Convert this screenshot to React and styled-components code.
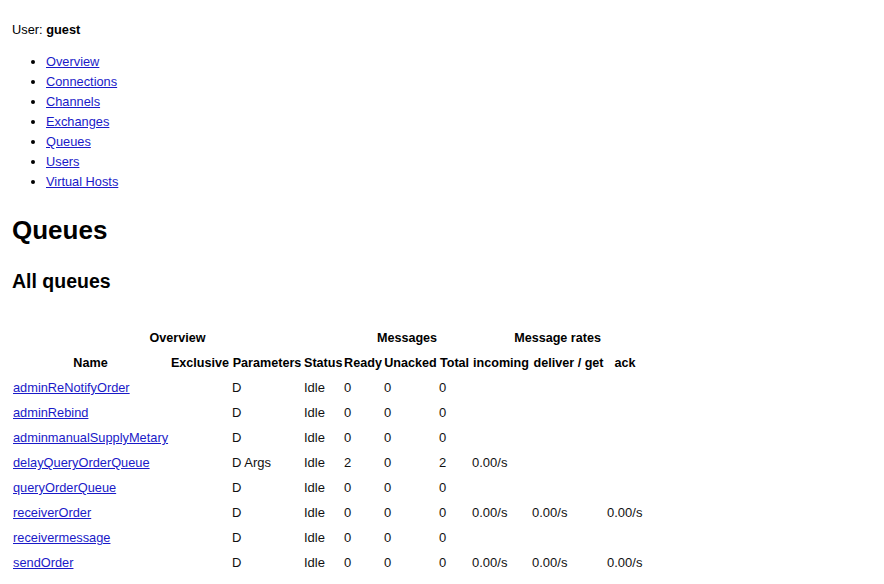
import React from 'react';
import styled, { createGlobalStyle } from 'styled-components';

const GlobalStyle = createGlobalStyle`
    body {
        margin: 0;
        background: #ffffff;
        color: #000000;
        font-family: "Liberation Sans", Arial, sans-serif;
        font-size: 12.8px;
    }
`;

const Page = styled.div`
    padding: 21px 12px 0 12px;
`;

const UserLine = styled.div`
    line-height: 18px;
    b {
        font-weight: bold;
    }
`;

const Nav = styled.ul`
    list-style: disc;
    margin: 13px 0 0 0;
    padding-left: 34px;
    li {
        line-height: 20px;
    }
`;

const Link = styled.a`
    color: #1a1ac8;
    text-decoration: underline;
`;

const Title = styled.h1`
    font-size: 26px;
    line-height: 30px;
    font-weight: bold;
    margin: 23px 0 0 0;
`;

const SubTitle = styled.h2`
    font-size: 19.5px;
    line-height: 23px;
    font-weight: bold;
    margin: 25px 0 0 0;
`;

const QueueTable = styled.table`
    border-collapse: collapse;
    table-layout: fixed;
    width: 632px;
    margin-top: 32px;
    margin-left: 0;
`;

const Col = styled.col`
    width: ${(props) => props.$w}px;
`;

const HeadCell = styled.th`
    font-size: 12.6px;
    font-weight: bold;
    text-align: center;
    height: 25px;
    padding: 0 1px;
    white-space: nowrap;
    vertical-align: middle;
`;

const Cell = styled.td`
    font-size: 13px;
    text-align: left;
    height: 25px;
    padding: 0 1px;
    white-space: nowrap;
    vertical-align: middle;
    overflow: visible;
    color: #111;
`;

const NameLink = styled(Link)`
    font-size: 12.8px;
`;

const navItems = [
    'Overview',
    'Connections',
    'Channels',
    'Exchanges',
    'Queues',
    'Users',
    'Virtual Hosts',
];

const columnWidths = [157, 62, 72, 40, 40, 55, 33, 60, 75, 38];

const queues = [
    { name: 'adminReNotifyOrder', params: 'D', ready: 0, unacked: 0, total: 0 },
    { name: 'adminRebind', params: 'D', ready: 0, unacked: 0, total: 0 },
    { name: 'adminmanualSupplyMetary', params: 'D', ready: 0, unacked: 0, total: 0 },
    { name: 'delayQueryOrderQueue', params: 'D Args', ready: 2, unacked: 0, total: 2, incoming: '0.00/s' },
    { name: 'queryOrderQueue', params: 'D', ready: 0, unacked: 0, total: 0 },
    { name: 'receiverOrder', params: 'D', ready: 0, unacked: 0, total: 0, incoming: '0.00/s', deliver: '0.00/s', ack: '0.00/s' },
    { name: 'receivermessage', params: 'D', ready: 0, unacked: 0, total: 0 },
    { name: 'sendOrder', params: 'D', ready: 0, unacked: 0, total: 0, incoming: '0.00/s', deliver: '0.00/s', ack: '0.00/s' },
];

const App = () => {
    return (
        <Page>
            <GlobalStyle />
            <UserLine>
                User: <b>guest</b>
            </UserLine>
            <Nav>
                {
                    navItems.map((item) => (
                        <li key={item}>
                            <Link href="#">{item}</Link>
                        </li>
                    ))
                }
            </Nav>
            <Title>Queues</Title>
            <SubTitle>All queues</SubTitle>
            <QueueTable>
                <colgroup>
                    {
                        columnWidths.map((w, index) => (
                            <Col $w={w} key={`col-${index}`} />
                        ))
                    }
                </colgroup>
                <thead>
                    <tr>
                        <HeadCell colSpan={4}>Overview</HeadCell>
                        <HeadCell colSpan={3}>Messages</HeadCell>
                        <HeadCell colSpan={3}>Message rates</HeadCell>
                    </tr>
                    <tr>
                        <HeadCell>Name</HeadCell>
                        <HeadCell>Exclusive</HeadCell>
                        <HeadCell>Parameters</HeadCell>
                        <HeadCell>Status</HeadCell>
                        <HeadCell>Ready</HeadCell>
                        <HeadCell>Unacked</HeadCell>
                        <HeadCell>Total</HeadCell>
                        <HeadCell>incoming</HeadCell>
                        <HeadCell>deliver / get</HeadCell>
                        <HeadCell>ack</HeadCell>
                    </tr>
                </thead>
                <tbody>
                    {
                        queues.map((queue) => (
                            <tr key={queue.name}>
                                <Cell><NameLink href="#">{queue.name}</NameLink></Cell>
                                <Cell></Cell>
                                <Cell>{queue.params}</Cell>
                                <Cell>Idle</Cell>
                                <Cell>{queue.ready}</Cell>
                                <Cell>{queue.unacked}</Cell>
                                <Cell>{queue.total}</Cell>
                                <Cell>{queue.incoming || ''}</Cell>
                                <Cell>{queue.deliver || ''}</Cell>
                                <Cell>{queue.ack || ''}</Cell>
                            </tr>
                        ))
                    }
                </tbody>
            </QueueTable>
        </Page>
    );
};

export default App;
